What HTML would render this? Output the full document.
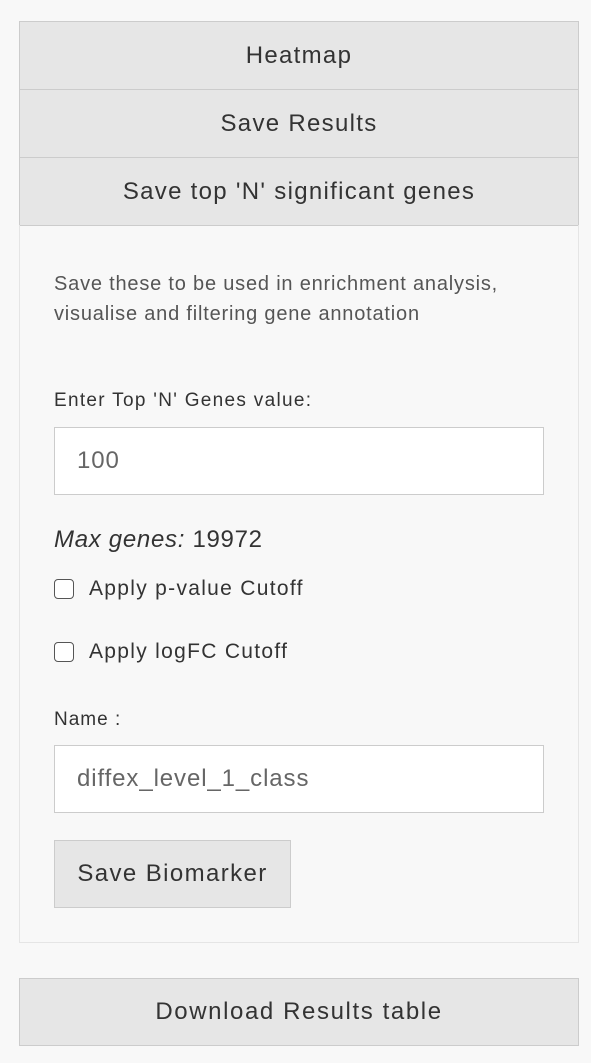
<!DOCTYPE html>
<html><head><style>
body{margin:0;background:#f8f8f8;width:591px;height:1063px;position:relative;font-family:"Liberation Sans",sans-serif;color:#333;overflow:hidden}
.h{position:absolute;left:19px;width:560px;background:#e6e6e6;border:1px solid #ccc;text-align:center;line-height:67px;font-size:24px;letter-spacing:1.3px;color:#333;box-sizing:border-box;height:69px}
.panel{position:absolute;left:19px;top:225px;width:560px;height:718px;border:1px solid #e5e5e5;box-sizing:border-box;border-top:none}
.t{position:absolute;left:54px;white-space:nowrap}
.inp{position:absolute;left:54px;width:490px;height:68px;background:#fff;border:1px solid #ccc;box-sizing:border-box;font-size:24px;color:#666;line-height:66px;padding-left:22px;letter-spacing:0.9px}
.cb{position:absolute;left:54px;width:20px;height:20px;border:1.5px solid #555;border-radius:4px;box-sizing:border-box;background:#fff}
</style></head><body>
<div class="h" style="top:21px">Heatmap</div>
<div class="h" style="top:89px">Save Results</div>
<div class="h" style="top:157px">Save top 'N' significant genes</div>
<div class="panel"></div>
<div class="t" style="top:269px;font-size:20px;letter-spacing:0.8px;color:#555;line-height:30px">Save these to be used in enrichment analysis,<br>visualise and filtering gene annotation</div>
<div class="t" style="top:390px;font-size:19px;letter-spacing:1.3px">Enter Top 'N' Genes value:</div>
<div class="inp" style="top:427px">100</div>
<div class="t" style="top:526px;font-size:24px;letter-spacing:0.7px"><i>Max genes:</i> 19972</div>
<div class="cb" style="top:579px"></div>
<div class="t" style="left:89px;top:577px;font-size:21px;letter-spacing:1.3px">Apply p-value Cutoff</div>
<div class="cb" style="top:642px"></div>
<div class="t" style="left:89px;top:640px;font-size:21px;letter-spacing:1.3px">Apply logFC Cutoff</div>
<div class="t" style="top:709px;font-size:19px;letter-spacing:1px">Name :</div>
<div class="inp" style="top:745px">diffex_level_1_class</div>
<div style="position:absolute;left:54px;top:840px;width:237px;height:68px;background:#e6e6e6;border:1px solid #ccc;box-sizing:border-box;font-size:24px;letter-spacing:1.4px;line-height:66px;text-align:center">Save Biomarker</div>
<div class="h" style="top:978px;height:68px;line-height:66px;letter-spacing:1.6px">Download Results table</div>
</body></html>
